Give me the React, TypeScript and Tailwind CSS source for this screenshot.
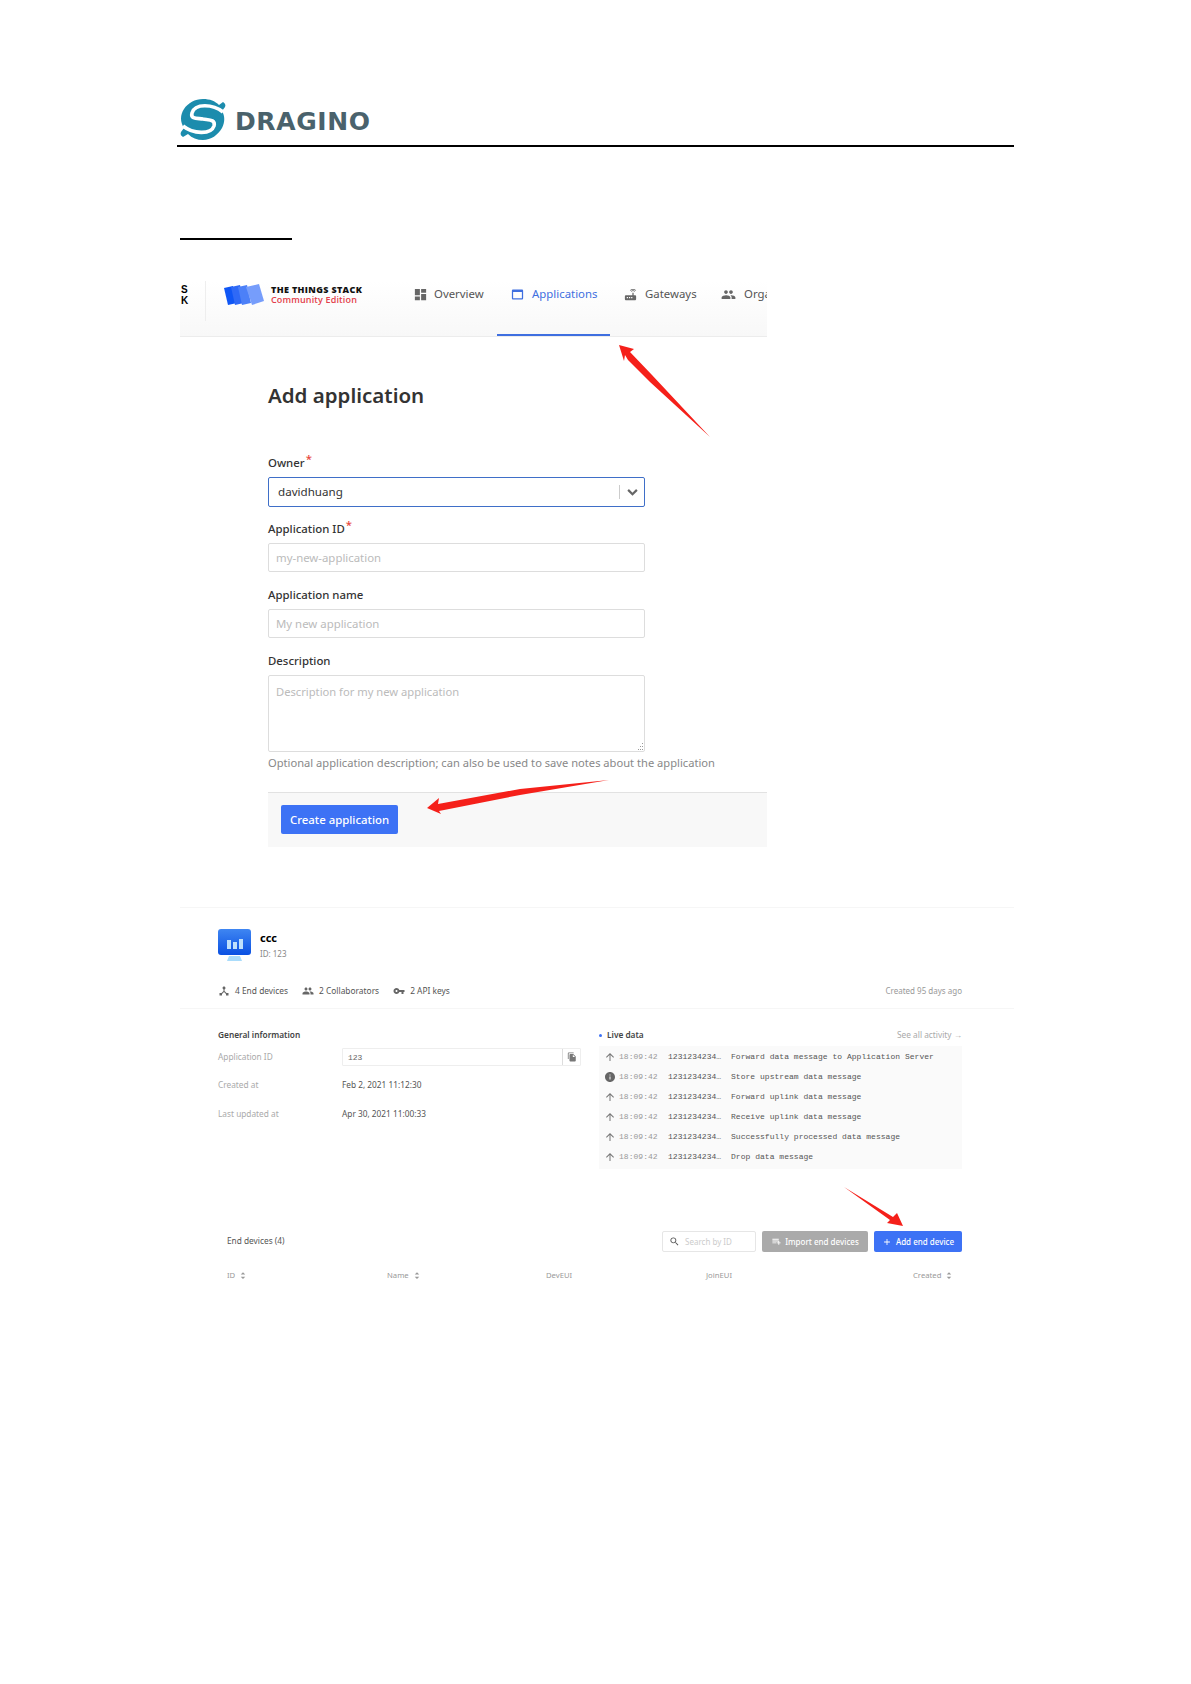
const P = {
  dash: "M3 13h8V3H3v10zm0 8h8v-6H3v6zm10 0h8V11h-8v10zm0-18v6h8V3h-8z",
  router: "M20.2 5.9l.8-.8C19.6 3.7 17.8 3 16 3s-3.6.7-5 2.1l.8.8C13 4.8 14.5 4.2 16 4.2s3 .6 4.2 1.7zm-.9.8c-.9-.9-2.1-1.4-3.3-1.4s-2.4.5-3.3 1.4l.8.8c.7-.7 1.6-1 2.5-1 .9 0 1.8.3 2.5 1l.8-.8zM19 13h-2V9h-2v4H5c-1.1 0-2 .9-2 2v4c0 1.1.9 2 2 2h14c1.1 0 2-.9 2-2v-4c0-1.1-.9-2-2-2zM8 18H6v-2h2v2zm3.5 0h-2v-2h2v2zm3.5 0h-2v-2h2v2z",
  group: "M16 11c1.66 0 2.99-1.34 2.99-3S17.66 5 16 5c-1.66 0-3 1.34-3 3s1.34 3 3 3zm-8 0c1.66 0 2.99-1.34 2.99-3S9.66 5 8 5C6.34 5 5 6.34 5 8s1.34 3 3 3zm0 2c-2.33 0-7 1.17-7 3.5V19h14v-2.5c0-2.33-4.67-3.5-7-3.5zm8 0c-.29 0-.62.02-.97.05 1.16.84 1.97 1.97 1.97 3.45V19h6v-2.5c0-2.33-4.67-3.5-7-3.5z",
  key: "M12.65 10C11.83 7.67 9.61 6 7 6c-3.31 0-6 2.69-6 6s2.69 6 6 6c2.61 0 4.83-1.67 5.65-4H17v4h4v-4h2v-4H12.65zM7 14c-1.1 0-2-.9-2-2s.9-2 2-2 2 .9 2 2-.9 2-2 2z",
  hub: "M17 16l-4-4V8.82C14.16 8.4 15 7.3 15 6c0-1.66-1.34-3-3-3S9 4.34 9 6c0 1.3.84 2.4 2 2.82V12l-4 4H3v5h5v-3.05l4-4.2 4 4.2V21h5v-5h-4z",
  copy: "M16 1H4c-1.1 0-2 .9-2 2v14h2V3h12V1zm-1 4l6 6v10c0 1.1-.9 2-2 2H7.99C6.89 23 6 22.1 6 21l.01-14c0-1.1.89-2 1.99-2h7zm-1 7h5.5L14 6.5V12z",
  web: "M19 4H5c-1.1 0-2 .9-2 2v12c0 1.1.9 2 2 2h14c1.1 0 2-.9 2-2V6c0-1.1-.9-2-2-2zm0 14H5V8h14v10z",
  up: "M4 12l1.41 1.41L11 7.83V20h2V7.83l5.58 5.59L20 12l-8-8-8 8z",
  info: "M12 2C6.48 2 2 6.48 2 12s4.48 10 10 10 10-4.48 10-10S17.52 2 12 2zm1 15h-2v-6h2v6zm0-8h-2V7h2v2z",
  search: "M15.5 14h-.79l-.28-.27C15.41 12.59 16 11.11 16 9.5 16 5.91 13.09 3 9.5 3S3 5.91 3 9.5 5.91 16 9.5 16c1.61 0 3.09-.59 4.23-1.57l.27.28v.79l5 4.99L20.49 19l-4.99-5zm-6 0C7.01 14 5 11.99 5 9.5S7.01 5 9.5 5 14 7.01 14 9.5 11.99 14 9.5 14z",
  list: "M3 6h14v2H3zm0 4h14v2H3zm0 4h9v2H3zm13 0v-3h2v3h3v2h-3v3h-2v-3h-3v-2z",
  plus: "M19 13h-6v6h-2v-6H5v-2h6V5h2v6h6v2z",
};

function Ico({ d, className }: { d: string; className: string }) {
  return (
    <svg viewBox="0 0 24 24" fill="currentColor" className={className}>
      <path d={d} />
    </svg>
  );
}

function Sort() {
  return (
    <svg viewBox="0 0 8 9" className="w-[6px] h-[7px] text-[#999]" fill="currentColor">
      <path d="M4 0L7 3H1zM4 9L1 6H7z" />
    </svg>
  );
}

const LOG = [
  "Forward data message to Application Server",
  "Store upstream data message",
  "Forward uplink data message",
  "Receive uplink data message",
  "Successfully processed data message",
  "Drop data message",
];

function Label({ text, req }: { text: string; req?: boolean }) {
  return (
    <div className="h-[14px] text-[11.4px] leading-[14px] font-medium text-[#333]">
      {text}
      {req && <span className="relative -top-[4px] ml-[1px] text-[#e8463c]">*</span>}
    </div>
  );
}

function Tab({ d, text, active, className }: { d: string; text: string; active?: boolean; className: string }) {
  return (
    <div className={`flex h-full items-center shrink-0 ${className} ${active ? "text-[#3f6fe0] border-b-2 border-[#3f6fe0] pb-[27px]" : "text-[#555] pb-[29px]"}`}>
      <Ico d={d} className={`w-[15px] h-[15px] ${active ? "text-[#3f6fe0]" : "text-[#666]"}`} />
      <span className="text-[11.4px] leading-[16px]">{text}</span>
    </div>
  );
}

export default function App() {
  return (
    <div className="relative w-[1191px] h-[1684px] bg-white overflow-hidden font-['Noto_Sans',sans-serif]">
      {/* page header */}
      <div className="ml-[177px] w-[837px] pt-[97px] border-b-2 border-black h-[147px]">
        <div className="flex items-center ml-[2px] h-[44px]">
          <svg viewBox="0 0 48 42" className="w-[48px] h-[42px] shrink-0">
            <path fill="#1c8cad" d="M24 1c7 0 12 2 16 6l4-3c2 1 3 3 2 5l-3 4c3 5 3 11 0 17-4 7-11 12-19 12-6 0-11-2-15-6l-5 3c-2-1-3-3-2-5l3-4C1 24 1 17 5 11 9 5 16 1 24 1z" />
            <path fill="none" stroke="#fff" strokeWidth="3.6" d="M44 14C34 6 16 5 13 15 11 22 20 20 24 21 29 22 37 21 35 28 32 37 14 36 4 28" />
          </svg>
          <span className="ml-[8px] pt-[5px] font-['DejaVu_Sans',sans-serif] font-bold text-[25px] leading-none tracking-[0.6px] text-[#4a626c]">DRAGINO</span>
        </div>
      </div>
      <div className="ml-[180px] mt-[91px] w-[112px] h-[2px] bg-black" />

      {/* Add application screenshot */}
      <div className="ml-[180px] mt-[41px] w-[587px]">
        <div className="flex h-[56px] items-stretch border-b border-[#ececec] bg-gradient-to-b from-white to-[#f8f8f8] overflow-hidden">
          <div className="w-[26px] shrink-0 border-r border-[#eee] h-[40px] pt-[3px] text-[10px] leading-[11px] font-['Liberation_Sans',sans-serif] font-bold text-black pl-[1px]">
            S<br />K
          </div>
          <div className="flex items-center ml-[18px] w-[189px] shrink-0 pb-[28px]">
            <svg viewBox="0 0 40 22" className="w-[40px] h-[22px] shrink-0">
              <path fill="#0f56f5" d="M0 4l9-2 4 17-9 2z" />
              <path fill="#2f69f6" d="M7 3l9-2 4 18-9 2z" />
              <path fill="#4c80f8" d="M14 3l9-2 4 18-9 2z" />
              <path fill="#769dfb" d="M22 3l13-3 5 17-12 4z" />
            </svg>
            <div className="ml-[7px] text-[9px] leading-[10px] font-['Open_Sans',sans-serif] font-extrabold">
              <div className="text-[#111] tracking-[0.35px]">THE THINGS STACK</div>
              <div className="text-[#e3404a] font-semibold tracking-[0.15px]">Community Edition</div>
            </div>
          </div>
          <Tab d={P.dash} text="Overview" className="gap-[6px] w-[72px]" />
          <Tab d={P.web} text="Applications" active className="gap-[7px] ml-[12px] w-[113px] pl-[13px]" />
          <Tab d={P.router} text="Gateways" className="gap-[7px] ml-[13px] w-[81px]" />
          <Tab d={P.group} text="Organizations" className="gap-[8px] ml-[17px] w-[105px]" />
        </div>

        <div className="ml-[88px] w-[499px]">
          <h1 className="mt-[43px] h-[30px] text-[20.5px] leading-[30px] font-semibold text-[#333]">Add application</h1>
          <div className="mt-[46px]"><Label text="Owner" req /></div>
          <div className="mt-[7px] w-[377px] h-[30px] rounded-[2px] border border-[#3f6fc8] flex items-center pl-[9px] pr-[5px] text-[11.6px] text-[#333]">
            <span className="flex-1">davidhuang</span>
            <span className="w-px h-[14px] bg-[#ccc]" />
            <svg viewBox="0 0 12 8" className="w-[11px] h-[7px] ml-[7px] mr-[1px]" fill="none" stroke="#666" strokeWidth="2.5"><path d="M1 1l5 5 5-5" /></svg>
          </div>
          <div className="mt-[15px]"><Label text="Application ID" req /></div>
          <div className="mt-[7px] w-[377px] h-[29px] rounded-[2px] border border-[#ddd] flex items-center pl-[7px] text-[11.4px] text-[#bbb]">my-new-application</div>
          <div className="mt-[16px]"><Label text="Application name" /></div>
          <div className="mt-[7px] w-[377px] h-[29px] rounded-[2px] border border-[#ddd] flex items-center pl-[7px] text-[11.4px] text-[#bbb]">My new application</div>
          <div className="mt-[16px]"><Label text="Description" /></div>
          <div className="relative mt-[7px] w-[377px] h-[77px] rounded-[2px] border border-[#ddd] pl-[7px] pt-[8px] text-[11.2px] leading-[16px] text-[#bbb]">
            Description for my new application
            <svg viewBox="0 0 8 8" className="absolute right-[1px] bottom-[1px] w-[8px] h-[8px]" fill="#999"><path d="M7 1h1v1H7zM5 4h1v1H5zM7 4h1v1H7zM3 7h1v1H3zM5 7h1v1H5zM7 7h1v1H7z" /></svg>
          </div>
          <div className="mt-[3px] h-[16px] text-[11.15px] leading-[16px] text-[#888]">Optional application description; can also be used to save notes about the application</div>
          <div className="mt-[21px] h-[55px] border-t border-[#e2e2e2] bg-[#f8f8f8] pl-[13px] pt-[12px]">
            <div className="w-[117px] h-[29px] rounded-[2px] bg-[#3d72f5] text-white text-[11.4px] font-medium flex items-center justify-center">Create application</div>
          </div>
        </div>
      </div>

      {/* Application overview screenshot */}
      <div className="ml-[180px] mt-[60px] w-[834px] border-t border-[#f6f6f6]">
        <div className="pl-[38px] pr-[52px]">
          <div className="flex h-[33px] mt-[21px]">
            <svg viewBox="0 0 33 32" className="w-[33px] h-[32px]">
              <defs>
                <linearGradient id="appIconFill" x1="0" y1="0" x2="0" y2="1">
                  <stop offset="0" stopColor="#3f86f2" />
                  <stop offset="1" stopColor="#0a50e2" />
                </linearGradient>
              </defs>
              <path fill="#aadcfb" d="M11 27h11l2 5H9z" />
              <rect width="33" height="26" rx="3" fill="url(#appIconFill)" />
              <path fill="#bfe0fb" d="M9 11h4v9H9zM15 13h4v7h-4zM21 10h4v10h-4z" />
            </svg>
            <div className="ml-[9px]">
              <div className="h-[16px] text-[11px] leading-[18px] font-bold text-black">ccc</div>
              <div className="h-[16px] text-[8px] leading-[17px] text-[#888]">ID: 123</div>
            </div>
          </div>
          <div className="flex items-center h-[16px] mt-[21px] text-[8.4px] text-[#555]">
            <Ico d={P.hub} className="w-[12px] h-[12px] text-[#666]" />
            <span className="ml-[5px]">4 End devices</span>
            <Ico d={P.group} className="ml-[14px] w-[12px] h-[12px] text-[#666]" />
            <span className="ml-[5px]">2 Collaborators</span>
            <Ico d={P.key} className="ml-[14px] w-[12px] h-[12px] text-[#666]" />
            <span className="ml-[5px]">2 API keys</span>
            <span className="ml-auto text-[8px] text-[#999]">Created 95 days ago</span>
          </div>
        </div>
        <div className="mt-[9px] border-t border-[#f6f6f6] pl-[38px] pr-[52px] grid grid-cols-[363px_363px] gap-x-[18px]">
          <div>
            <div className="mt-[19px] h-[14px] text-[8.3px] leading-[14px] font-semibold text-[#444]">General information</div>
            <div className="flex items-center mt-[6px] h-[18px] text-[8.3px]">
              <span className="w-[124px] text-[#aaa]">Application ID</span>
              <div className="flex-1 h-[18px] flex border border-[#eee] rounded-[1px]">
                <span className="flex-1 pl-[5px] font-['Liberation_Mono',monospace] text-[8px] leading-[17px] text-[#666]">123</span>
                <span className="w-[18px] border-l border-[#ddd] flex items-center justify-center"><Ico d={P.copy} className="w-[10px] h-[10px] text-[#777]" /></span>
              </div>
            </div>
            <div className="flex mt-[12px] h-[14px] items-center text-[8.3px]">
              <span className="w-[124px] text-[#aaa]">Created at</span><span className="text-[#555]">Feb 2, 2021 11:12:30</span>
            </div>
            <div className="flex mt-[15px] h-[14px] items-center text-[8.3px]">
              <span className="w-[124px] text-[#aaa]">Last updated at</span><span className="text-[#555]">Apr 30, 2021 11:00:33</span>
            </div>
          </div>
          <div>
            <div className="mt-[19px] h-[14px] flex items-center text-[8.3px]">
              <span className="w-[3px] h-[3px] rounded-full bg-[#3d72f5] mr-[5px]" />
              <span className="font-semibold text-[#444]">Live data</span>
              <span className="ml-auto text-[#aaa]">See all activity →</span>
            </div>
            <div className="mt-[4px] h-[123px] bg-[#fafafa] font-['Liberation_Mono',monospace] text-[8px] tracking-[0.03px] pt-[1px]">
              {LOG.map((m, i) => (
                <div key={m} className="flex items-center h-[20px] whitespace-pre">
                  {i === 1 ? (
                    <Ico d={P.info} className="ml-[5px] w-[12px] h-[12px] text-[#666] shrink-0" />
                  ) : (
                    <Ico d={P.up} className="ml-[5px] w-[12px] h-[12px] text-[#777] shrink-0" />
                  )}
                  <span className="ml-[3px] w-[49px] text-[#999]">18:09:42</span>
                  <span className="w-[63px] text-[#555]">1231234234…</span>
                  <span className="text-[#555]">{m}</span>
                </div>
              ))}
            </div>
          </div>
        </div>
        <div className="mt-[62px] ml-[47px] mr-[52px] flex items-center h-[21px]">
          <span className="text-[8.3px] text-[#555]">End devices (4)</span>
          <div className="ml-auto w-[94px] h-[21px] rounded-[2px] border border-[#e6e6e6] flex items-center pl-[6px] text-[8px] text-[#ccc]">
            <Ico d={P.search} className="w-[11px] h-[11px] text-[#555] mr-[5px]" />Search by ID
          </div>
          <div className="ml-[6px] w-[106px] h-[21px] rounded-[2px] bg-[#aaa] text-white text-[8px] font-medium flex items-center justify-center gap-[3px]">
            <Ico d={P.list} className="w-[11px] h-[11px]" />Import end devices
          </div>
          <div className="ml-[6px] w-[88px] h-[21px] rounded-[2px] bg-[#3d72f5] text-white text-[8px] font-medium flex items-center justify-center gap-[4px]">
            <Ico d={P.plus} className="w-[10px] h-[10px]" />Add end device
          </div>
        </div>
        <div className="mt-[17px] ml-[47px] mr-[52px] flex h-[14px] items-center text-[7.7px] text-[#999]">
          <span className="w-[160px] flex items-center gap-[5px]">ID <Sort /></span>
          <span className="w-[159px] flex items-center gap-[5px]">Name <Sort /></span>
          <span className="w-[160px]">DevEUI</span>
          <span className="w-[207px]">JoinEUI</span>
          <span className="flex items-center gap-[5px]">Created <Sort /></span>
        </div>
      </div>

      {/* red annotation arrows lying over the screenshots */}
      <svg viewBox="0 0 1191 1684" className="absolute inset-0 w-[1191px] h-[1684px] pointer-events-none" fill="#f5201a">
        <path d="M619 345L634 349 630 352 652 375 710 437 650 382 628 360 625 355 624 361z" />
        <path d="M609 780L520 795 439 811 441 814 427 808 439 798 438 804 520 789z" />
        <path d="M844 1187L893 1217 897 1213 903 1226 887 1223 890 1220z" />
      </svg>
    </div>
  );
}
